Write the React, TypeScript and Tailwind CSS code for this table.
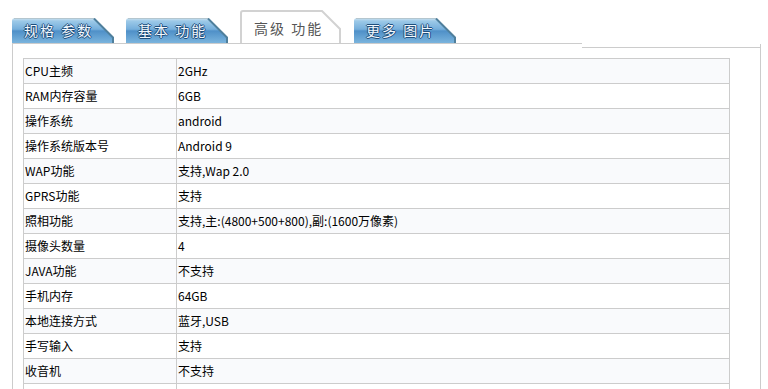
import React from "react";

const rows: [string, string][] = [
  ["CPU主频", "2GHz"],
  ["RAM内存容量", "6GB"],
  ["操作系统", "android"],
  ["操作系统版本号", "Android 9"],
  ["WAP功能", "支持,Wap 2.0"],
  ["GPRS功能", "支持"],
  ["照相功能", "支持,主:(4800+500+800),副:(1600万像素)"],
  ["摄像头数量", "4"],
  ["JAVA功能", "不支持"],
  ["手机内存", "64GB"],
  ["本地连接方式", "蓝牙,USB"],
  ["手写输入", "支持"],
  ["收音机", "不支持"],
  ["", ""],
];

function BlueTab({ label }: { label: string }) {
  return (
    <div className="relative w-[102px] h-[25px] shrink-0">
      <svg className="absolute inset-0" width="102" height="25" viewBox="0 0 102 25">
        <defs>
          <linearGradient id="tabg" x1="0" y1="0" x2="0" y2="1">
            <stop offset="0" stopColor="#d2e5f1" />
            <stop offset="0.12" stopColor="#9cc9e8" />
            <stop offset="0.45" stopColor="#75aedb" />
            <stop offset="0.52" stopColor="#4f90c8" />
            <stop offset="1" stopColor="#7ab4dd" />
          </linearGradient>
        </defs>
        <path d="M0,25 V3 Q0,0 3,0 H82 L101,19 V25 Z" fill="url(#tabg)" />
        <path d="M2,0.5 H82" stroke="#b4c6cf" strokeWidth="1" fill="none" />
        <path d="M82,0.5 L101,19.5 V25" stroke="#4f7f9c" strokeWidth="2" fill="none" />
      </svg>
      <div className="relative pl-[12px] pt-[4px] text-[14px] leading-[17px] tracking-[2px] text-[#f2f8ff] [text-shadow:1px_0_#1f4f7c,-1px_0_#1f4f7c,0_1px_#1f4f7c,0_-1px_#1f4f7c]">
        {label}
      </div>
    </div>
  );
}

function ActiveTab({ label }: { label: string }) {
  return (
    <div className="relative w-[102px] h-[33px] shrink-0">
      <svg className="absolute inset-0" width="102" height="33" viewBox="0 0 102 33">
        <path
          d="M1,33 V3 Q1,1 3,1 H82 L100,19 V33"
          fill="#ffffff"
          stroke="#d2d2d2"
          strokeWidth="2"
        />
      </svg>
      <div className="relative pl-[14px] pt-[10px] text-[14px] leading-[17px] tracking-[2px] text-[#555555]">
        {label}
      </div>
    </div>
  );
}

export default function App() {
  return (
    <div className="w-[768px] h-[389px] overflow-hidden bg-white [font-family:'Noto_Sans_CJK_SC','Liberation_Sans',sans-serif]">
      <div className="pl-[12px] pt-[10px]">
        <div className="flex items-end gap-[12px] w-[570px] h-[34px] border-b border-[#cccccc]">
          <BlueTab label="规格 参数" />
          <BlueTab label="基本 功能" />
          <ActiveTab label="高级 功能" />
          <BlueTab label="更多 图片" />
        </div>
      </div>
      <div className="ml-[12px] w-[749px] h-[400px] border-l border-r border-[#cccccc]">
        <div className="flex h-[4px]">
          <div className="w-[569px] shrink-0" />
          <div className="flex-1 h-full border-b border-[#cccccc]" />
        </div>
        <div className="ml-[10px] mt-[10px] w-[707px] border-l border-t border-r border-[#cccccc] text-[12px] text-black">
          {rows.map(([k, v], i) => (
            <div
              key={i}
              className={`flex h-[25px] border-b border-[#cccccc] ${i % 2 === 0 ? "bg-[#f9fafc]" : "bg-white"}`}
            >
              <div className="w-[153px] shrink-0 border-r border-[#cccccc] pl-[1px] flex items-center">
                {k}
              </div>
              <div className="flex-1 pl-[1px] flex items-center">{v}</div>
            </div>
          ))}
        </div>
      </div>
    </div>
  );
}
